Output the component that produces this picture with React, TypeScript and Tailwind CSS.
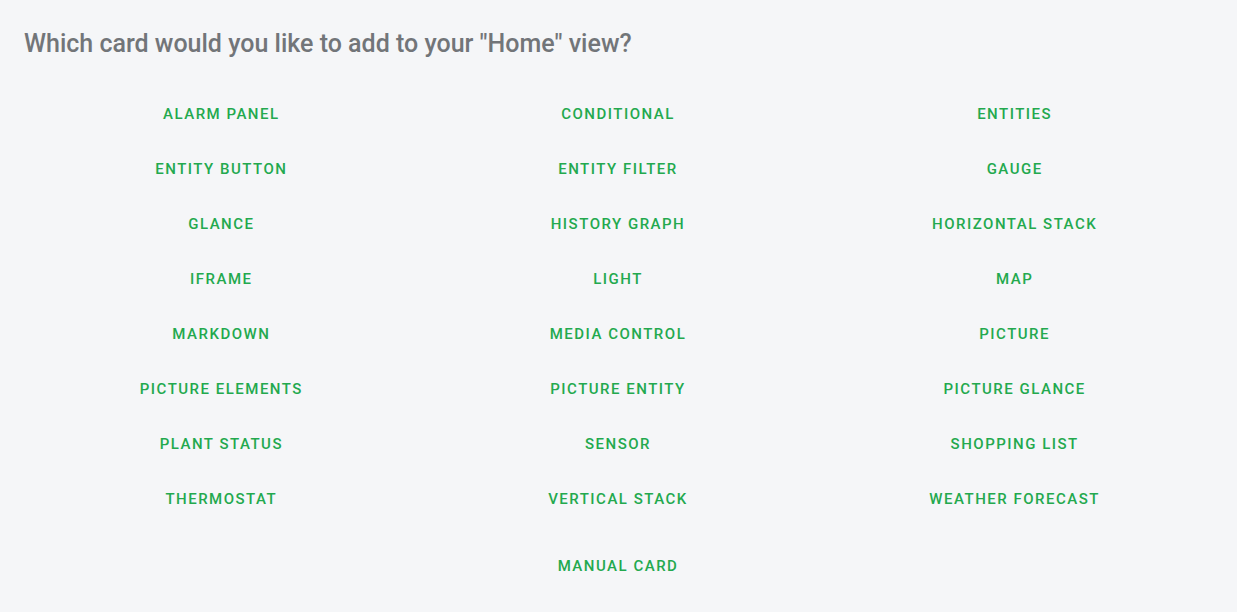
const cards = [
  'Alarm panel',
  'Conditional',
  'Entities',
  'Entity button',
  'Entity filter',
  'Gauge',
  'Glance',
  'History graph',
  'Horizontal stack',
  'iFrame',
  'Light',
  'Map',
  'Markdown',
  'Media control',
  'Picture',
  'Picture elements',
  'Picture entity',
  'Picture glance',
  'Plant status',
  'Sensor',
  'Shopping list',
  'Thermostat',
  'Vertical stack',
  'Weather forecast',
]

function CardButton({ label }: { label: string }) {
  return (
    <button
      type="button"
      className="h-[36px] px-4 rounded text-[15px] font-medium uppercase tracking-[0.1em] text-[#23a94e] hover:bg-[#23a94e]/10"
    >
      {label}
    </button>
  )
}

export default function App() {
  return (
    <div className="min-h-screen bg-[#f5f6f8] px-6 pt-[28px] font-['Roboto',sans-serif]">
      <h1 className="text-[25px] leading-[32px] font-medium text-[#727579]">
        Which card would you like to add to your "Home" view?
      </h1>

      {/* card type picker */}
      <div className="mt-[36px] -ml-px grid grid-cols-3 gap-y-[19px] justify-items-center">
        {cards.map(c => (
          <CardButton key={c} label={c} />
        ))}
      </div>

      <div className="mt-[31px] -ml-px flex justify-center">
        <CardButton label="Manual card" />
      </div>
    </div>
  )
}
